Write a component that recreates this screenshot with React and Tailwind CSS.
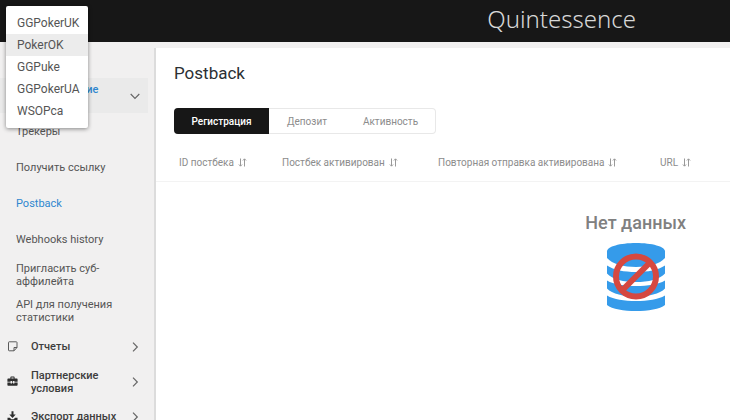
import React, { useState } from 'react';

const brands = ['GGPokerUK', 'PokerOK', 'GGPuke', 'GGPokerUA', 'WSOPca'];

const links = ['Трекеры', 'Получить ссылку', 'Postback', 'Webhooks history', 'Пригласить суб-аффилейта', 'API для получения статистики'];

const tabs = [
    { name: 'Регистрация', width: 'w-[95px]' },
    { name: 'Депозит', width: 'w-[76px]' },
    { name: 'Активность', width: 'w-[91px]' },
];

const columns = [
    { name: 'ID постбека', width: 'w-[103px]' },
    { name: 'Постбек активирован', width: 'w-[156px]' },
    { name: 'Повторная отправка активирована', width: 'w-[222px]' },
    { name: 'URL', width: '' },
];

const NoteIcon = () => (
    <svg className="w-[11px] h-[11px]" viewBox="0 0 11 11" fill="none" stroke="#5a5a5a" strokeLinejoin="round">
        <path d="M1.500 1.500a.7.7 0 0 1 .7-.7h7.100a.7.7 0 0 1 .7.7v5L7 9.800H2.200a.7.7 0 0 1-.7-.7zM10 6.500H7v3.300" />
    </svg>
);

const CaseIcon = () => (
    <svg className="w-[11px] h-[11px]" viewBox="0 0 11 11" fill="#2d2d2d">
        <path d="M3.400 2.400V1.200c0-.4.3-.7.7-.7h2.800c.4 0 .7.3.7.7v1.200h2c.6 0 1 .4 1 1v2.400H7.400v-.7H6v.7H5v-.7H3.600v.7H.4V3.400c0-.6.4-1 1-1zm1-.9v.9h2.200v-.9zM.4 6.600h3.200v.8H5v-.8h1v.8h1.400v-.8h3.200v2.200c0 .6-.4 1-1 1H1.400c-.6 0-1-.4-1-1z" />
    </svg>
);

const ExportIcon = () => (
    <svg className="w-[11px] h-[11px]" viewBox="0 0 11 11" fill="#2d2d2d">
        <path d="M4.500.3h2v3.200h2.200L5.500 6.900 2.300 3.500h2.200zM.5 6.700h2.300l1.600 1.600h2.200l1.600-1.600h2.300v3.700H.5z" />
    </svg>
);

const Chevron = ({ down }) => (
    <svg className={down ? 'w-[10px] h-[10px] rotate-90' : 'w-[10px] h-[10px]'} viewBox="0 0 10 10" fill="none" stroke="#666" strokeWidth="1.2">
        <path d="M3 .7 7.300 5 3 9.300" />
    </svg>
);

const SortIcon = () => (
    <svg className="w-[9px] h-[9px]" viewBox="0 0 9 9" fill="none" stroke="#999">
        <path d="M2.500.5v7.500M.9 6.500l1.600 1.700 1.600-1.700M6.500 8.500V1M4.900 2.500l1.600-1.700 1.600 1.700" />
    </svg>
);

const NoDataIcon = () => (
    <svg className="w-[60px] h-[70px]" viewBox="0 0 60 70" fill="none">
        <g fill="#359bea">
            <path d="M1 9.500C1 4.500 14 1 30 1s29 3.500 29 8.500V16c-5 6-17 9-29 9S6 22 1 16z" />
            <path d="M1 23.500C8 28 18 30 30 30s22-2 29-6.500v8c-5 6-17 8.500-29 8.500S6 37.500 1 31.500z" />
            <path d="M1 38.500C8 42.500 18 44 30 44s22-1.500 29-5.500v8c-5 5.500-17 8-29 8S6 52 1 46.500z" />
            <path d="M1 53.500C8 57.500 18 59 30 59s22-1.500 29-5.500V63c-5 4-17 6-29 6S6 67 1 63z" />
        </g>
        <circle cx="30" cy="34.500" r="20" stroke="#d54840" strokeWidth="6" />
        <path d="M16 48.500 44 20.500" stroke="#d54840" strokeWidth="6" />
    </svg>
);

const sections = [
    { name: 'Отчеты', Icon: NoteIcon },
    { name: 'Партнерские условия', Icon: CaseIcon },
    { name: 'Экспорт данных', Icon: ExportIcon },
];

const App = () => {
    const [brand, setBrand] = useState('PokerOK');
    const [tab, setTab] = useState('Регистрация');

    return (
        <div className="relative h-screen flex flex-col overflow-hidden bg-[#f1f0f0] font-['Roboto',sans-serif] text-[11px] leading-[13px] text-[#555]">
            <header className="shrink-0 h-[42px] flex items-center justify-end pr-[94px] bg-[#171717]">
                <span className="pb-1 font-['Noto_Sans',sans-serif] font-light text-[24px] leading-[36px] text-[#d8d8d8]">Quintessence</span>
            </header>

            <div className="flex-1 min-h-0 flex">
                <aside className="shrink-0 w-[154px] pt-9 pr-[6px]">
                    <button type="button" className="w-full h-[35px] pl-[31px] pr-2 flex items-center justify-between bg-[#eaeaea] text-left font-medium text-[#2f87cf]">
                        <span className="w-[70px]">Партнерские ссылки</span>
                        <Chevron down />
                    </button>
                    <nav>
                        {links.map((link) => (
                            <a
                                key={link}
                                href="#"
                                className={`h-9 pl-4 pr-5 flex items-center ${link === 'Postback' ? 'text-[#2f87cf]' : ''}`}
                            >
                                {link}
                            </a>
                        ))}
                    </nav>
                    {sections.map(({ name, Icon }) => (
                        <button key={name} type="button" className="w-full h-[35px] pl-[7px] pr-2 flex items-center text-left font-medium text-[#3d3d3d]">
                            <Icon />
                            <span className="flex-1 pl-[13px] pr-3">{name}</span>
                            <Chevron />
                        </button>
                    ))}
                </aside>

                <main className="flex-1 min-w-0 mt-[6px] border-l-2 border-[#dcdcdc] bg-white">
                    <h1 className="pl-[18px] pt-[14px] text-[17px] leading-[22px] text-[#2b2f33]">Postback</h1>

                    <div className="w-fit mt-6 ml-[18px] flex rounded shadow-[inset_0_0_0_1px_#e8e8e8] overflow-hidden text-[10px]" role="tablist">
                        {tabs.map(({ name, width }) => (
                            <button
                                key={name}
                                type="button"
                                role="tab"
                                aria-selected={tab === name}
                                onClick={() => setTab(name)}
                                className={`h-[26px] ${width} ${tab === name ? 'bg-[#171717] text-white font-medium' : 'text-[#8c8c8c]'}`}
                            >
                                {name}
                            </button>
                        ))}
                    </div>

                    <table className="w-full mt-[10px] table-fixed border-b border-[#f3f3f3] text-[10px] text-[#8c8c8c]">
                        <thead>
                            <tr className="h-[37px]">
                                {columns.map(({ name, width }) => (
                                    <th key={name} className={`${width} pl-[23px] text-left font-normal`}>
                                        <span className="flex items-center gap-1 whitespace-nowrap">
                                            {name} <SortIcon />
                                        </span>
                                    </th>
                                ))}
                            </tr>
                        </thead>
                    </table>

                    <div className="mt-[30px] pr-[44px] flex flex-col items-end">
                        <div className="flex flex-col items-center">
                            <p className="text-[18px] leading-[22px] font-medium text-[#808080]">Нет данных</p>
                            <div className="mt-2"><NoDataIcon /></div>
                        </div>
                    </div>
                </main>
            </div>

            <ul className="absolute left-[6px] top-[6px] w-[82px] py-[6px] rounded-xs bg-white shadow-[0_1px_4px_rgba(0,0,0,0.45)] text-[12px]" role="listbox">
                {brands.map((name) => (
                    <li key={name} role="option" aria-selected={brand === name}>
                        <button
                            type="button"
                            onClick={() => setBrand(name)}
                            className={`w-full h-[22px] pl-[11px] text-left ${brand === name ? 'bg-[#ececec]' : ''}`}
                        >
                            {name}
                        </button>
                    </li>
                ))}
            </ul>
        </div>
    );
};

export default App;
